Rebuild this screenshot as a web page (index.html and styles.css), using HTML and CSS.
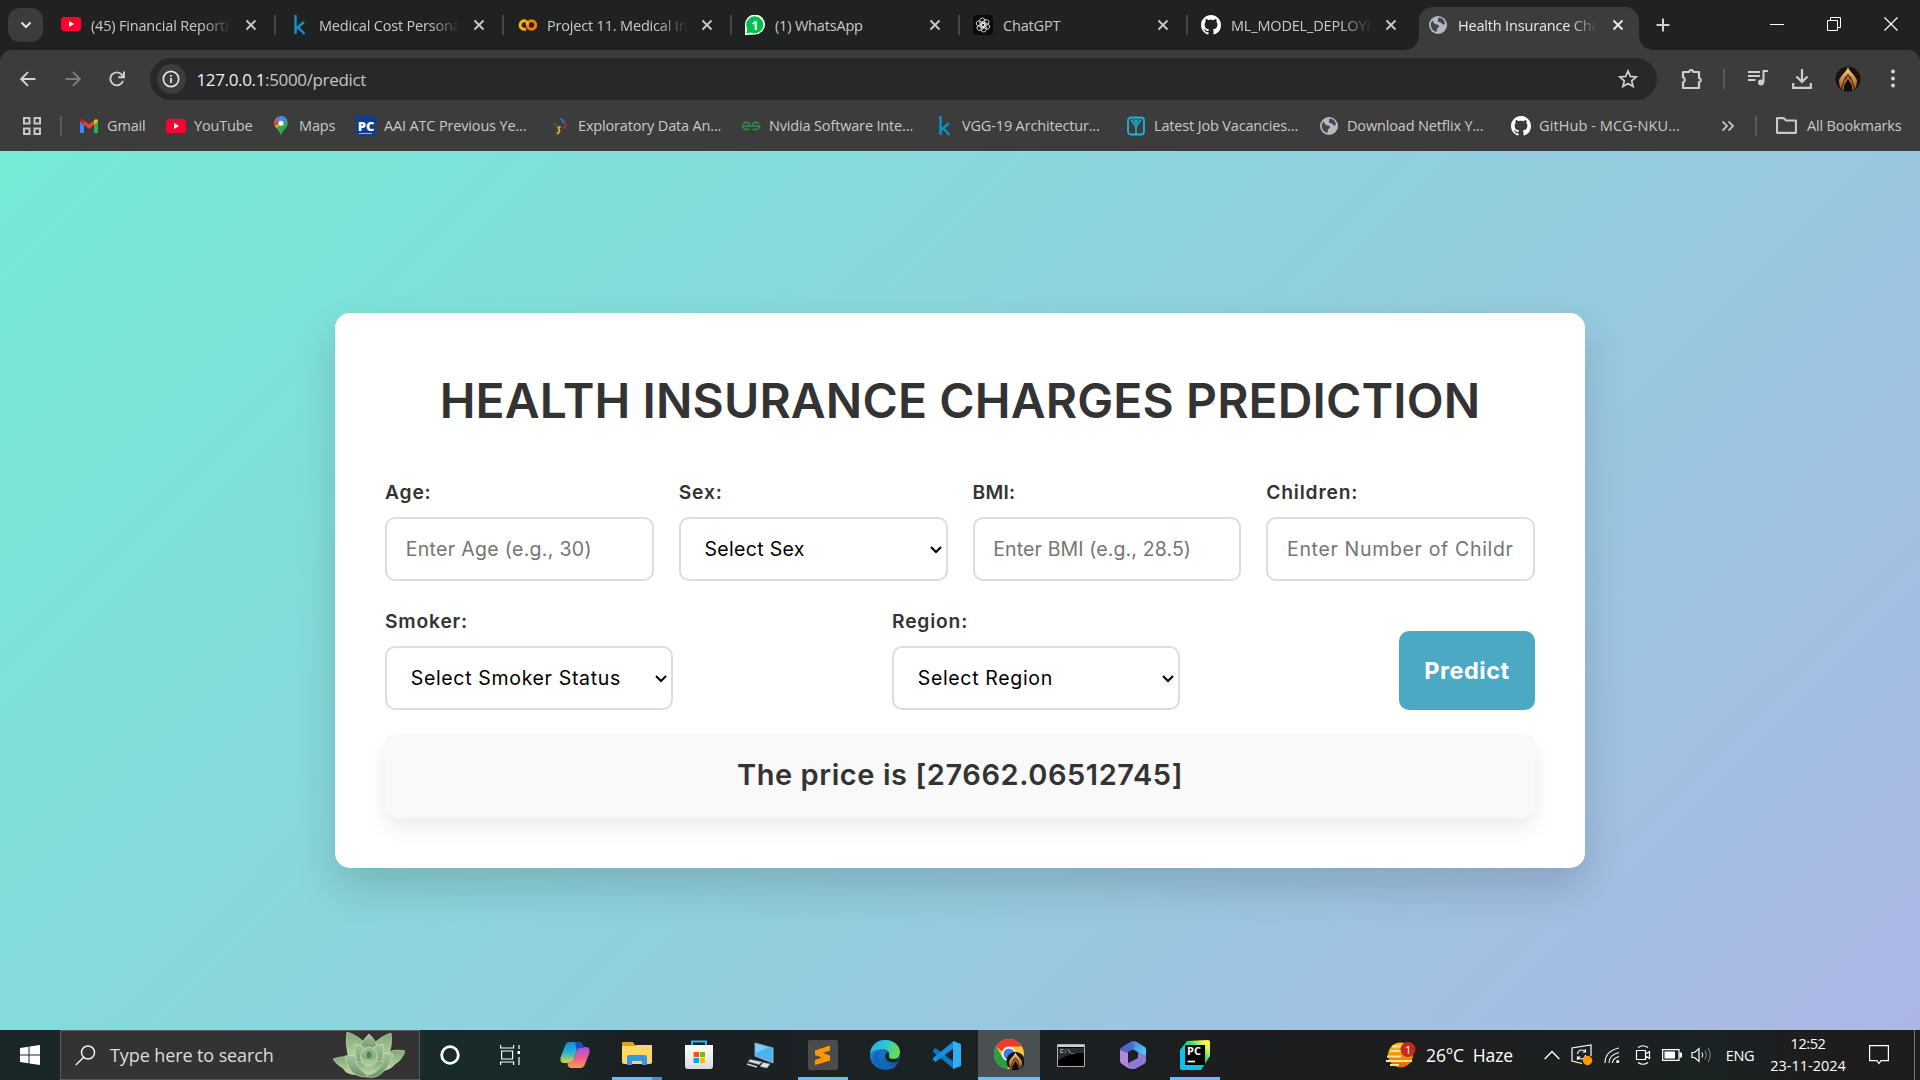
FILE: index.html
```html
<!DOCTYPE html>
<html lang="en">
<head>
<meta charset="utf-8">
<title>Health Insurance Charges Prediction</title>
<link rel="stylesheet" href="styles.css">
</head>
<body>
<svg class="defs" width="0" height="0" aria-hidden="true">
  <defs>
    <linearGradient id="gSilver" x1="0" y1="0" x2="0" y2="1"><stop offset="0" stop-color="#fff"/><stop offset="1" stop-color="#dcdcdc"/></linearGradient>
    <linearGradient id="gCopA" x1="0" y1="0" x2="0" y2="1"><stop offset="0" stop-color="#1488e8"/><stop offset=".5" stop-color="#25b3c9"/><stop offset="1" stop-color="#e8d03a"/></linearGradient>
    <linearGradient id="gCopB" x1="0" y1="0" x2="0" y2="1"><stop offset="0" stop-color="#a04ff0"/><stop offset=".5" stop-color="#ee5a94"/><stop offset="1" stop-color="#ff9a55"/></linearGradient>
    <linearGradient id="gEdgeA" x1="0" y1="0" x2="1" y2=".3"><stop offset="0" stop-color="#2aa9e8"/><stop offset=".5" stop-color="#2cc3d8"/><stop offset="1" stop-color="#66dd55"/></linearGradient>
    <linearGradient id="gEdgeB" x1="0" y1="0" x2="1" y2="1"><stop offset="0" stop-color="#1b8fe0"/><stop offset="1" stop-color="#0c4f9f"/></linearGradient>
    <linearGradient id="g365" x1="0" y1="0" x2="1" y2=".6"><stop offset="0" stop-color="#4a6fd8"/><stop offset="1" stop-color="#4fc8f5"/></linearGradient>
    <linearGradient id="gPy" x1="0" y1="1" x2="1" y2="0"><stop offset=".3" stop-color="#07c3f2"/><stop offset=".6" stop-color="#21d789"/><stop offset=".85" stop-color="#fcf84a"/></linearGradient>
    <linearGradient id="gSun" x1="0" y1="0" x2="0" y2="1"><stop offset="0" stop-color="#ffc800"/><stop offset="1" stop-color="#e8620a"/></linearGradient>
    <linearGradient id="gLeaf" x1="0" y1="0" x2="0" y2="1"><stop offset="0" stop-color="#7fa67c"/><stop offset="1" stop-color="#c3d8a2"/></linearGradient>
    <linearGradient id="gLeaf2" x1="0" y1="0" x2="0" y2="1"><stop offset="0" stop-color="#a3c49a"/><stop offset="1" stop-color="#6b9470"/></linearGradient>
    <linearGradient id="gGold" x1="0" y1="0" x2="0" y2="1"><stop offset="0" stop-color="#ffd08a"/><stop offset="1" stop-color="#a4501c"/></linearGradient>
    <symbol id="yt" viewBox="0 0 20 14"><rect width="20" height="14" rx="3" fill="#ff0033"/><path d="M8 4l5 3-5 3z" fill="#fff"/></symbol>
    <symbol id="kag" viewBox="0 0 20 20"><path d="M6.500 0v19M15 7L7 14M9 12.200L15.500 19" fill="none" stroke="#1290c6" stroke-width="2.400"/></symbol>
    <symbol id="x" viewBox="0 0 12 12"><path d="M1.500 1.500l9 9M10.500 1.500l-9 9" stroke="currentColor" stroke-width="1.900"/></symbol>
    <symbol id="gh" viewBox="0 0 16 16"><path fill="#fff" d="M8 0C3.58 0 0 3.58 0 8c0 3.54 2.29 6.53 5.47 7.59.4.07.55-.17.55-.38 0-.19-.01-.82-.01-1.49-2.01.37-2.53-.49-2.69-.94-.09-.23-.48-.94-.82-1.13-.28-.15-.68-.52-.01-.53.63-.01 1.08.58 1.23.82.72 1.21 1.87.87 2.33.66.07-.52.28-.87.51-1.07-1.78-.2-3.64-.89-3.64-3.95 0-.87.31-1.59.82-2.15-.08-.2-.36-1.02.08-2.12 0 0 .67-.21 2.2.82.64-.18 1.32-.27 2-.27s1.36.09 2 .27c1.53-1.04 2.2-.82 2.2-.82.44 1.100.16 1.920.08 2.120.51.56.82 1.270.82 2.150 0 3.070-1.870 3.750-3.650 3.950.29.25.54.73.54 1.480 0 1.070-.01 1.930-.01 2.200 0 .21.15.46.55.38A8.013 8.013 0 0 0 16 8c0-4.420-3.580-8-8-8z"/></symbol>
    <symbol id="globe" viewBox="0 0 18 18"><circle cx="9" cy="9" r="9" fill="#b4b9c1"/><path d="M3.200 4.500C5 6 4.500 7.500 6.500 8.200c2 .5 3.500.3 3.500 2-.2 1.500-2 1.300-2.200 3C7.500 15 8 16 7 15.800 3 14.500 1.500 11 1.800 7.500zM9 2c2-.8 4 .2 5 1.500 1.500 1.800 2 3.500 1.800 5-1.800.5-2.600-.8-3.800-1.800C10.800 6 9.500 6.500 9 5.300 8.700 4 9.800 3.500 9 2z" fill="#42464b"/></symbol>
    <symbol id="avatar" viewBox="0 0 26 26"><circle cx="13" cy="13" r="12.500" fill="#171310"/><path d="M13 1c1 4 6 7 9 13l-.5 5-1.500 4-3.500-11L13 8l-3.500 4L6 23l-1.500-4L4 14c3-6 8-9 9-13z" fill="url(#gGold)"/><path d="M13 9l3.500 5 2.500 9-1.500 1L13 14l-4.500 10L7 23l2.500-9z" fill="#a9642d"/><path d="M13 13l4 7v5H9v-5z" fill="#0d0a08"/></symbol>
  </defs>
</svg>

<div class="screen">
  <header class="browser">
    <div class="tabstrip">
      <button class="tab-search" aria-label="Search tabs"><svg width="12" height="8" viewBox="0 0 12 8"><path d="M1.500 1.500L6 6l4.500-4.500" fill="none" stroke="#e3e3e3" stroke-width="2"/></svg></button>
      <div class="tabs">
        <div class="tab"><svg class="fav" viewBox="0 0 20 20"><use href="#yt" y="2" width="20" height="14"/></svg><span class="tab-title fade">(45) Financial Reporti</span><svg class="close"><use href="#x"/></svg></div>
        <div class="tab"><svg class="fav"><use href="#kag"/></svg><span class="tab-title fade">Medical Cost Persona</span><svg class="close"><use href="#x"/></svg></div>
        <div class="tab"><svg class="fav" viewBox="0 0 20 20"><path d="M9 6.200a4.200 4.200 0 1 0 0 7.600" fill="none" stroke="#ffb300" stroke-width="3"/><circle cx="14.500" cy="10" r="4.200" fill="none" stroke="#f57c00" stroke-width="3"/><path d="M9 6.200q2 1.500 1.200 3.800" fill="none" stroke="#ffb300" stroke-width="3"/></svg><span class="tab-title fade">Project 11. Medical In</span><svg class="close"><use href="#x"/></svg></div>
        <div class="tab"><svg class="fav" viewBox="0 0 20 20"><path d="M0 20V9.500A10 10 0 1 1 10 19.500z" fill="#fff"/><path d="M1.500 18.500l.8-4.500A8.500 8.500 0 1 1 6 17.500z" fill="#00c04b"/><text x="10" y="14.600" text-anchor="middle" class="badge-num">1</text></svg><span class="tab-title">(1) WhatsApp</span><svg class="close"><use href="#x"/></svg></div>
        <div class="tab"><svg class="fav" viewBox="0 0 20 20"><rect width="20" height="20" rx="4" fill="#0b0b0b"/><g fill="none" stroke="#eee" stroke-width=".8"><rect id="petal" x="6.800" y="3" width="5" height="8.800" rx="2.500"/><use href="#petal" transform="rotate(60 10 10)"/><use href="#petal" transform="rotate(120 10 10)"/><use href="#petal" transform="rotate(180 10 10)"/><use href="#petal" transform="rotate(240 10 10)"/><use href="#petal" transform="rotate(300 10 10)"/></g></svg><span class="tab-title">ChatGPT</span><svg class="close"><use href="#x"/></svg></div>
        <div class="tab"><svg class="fav"><use href="#gh"/></svg><span class="tab-title fade">ML_MODEL_DEPLOYM</span><svg class="close"><use href="#x"/></svg></div>
        <div class="tab active"><svg class="fav small"><use href="#globe"/></svg><span class="tab-title fade">Health Insurance Cha</span><svg class="close"><use href="#x"/></svg></div>
      </div>
      <svg class="new-tab" viewBox="0 0 14 14"><path d="M7 .5v13M.5 7h13" stroke="#d0d0d0" stroke-width="2"/></svg>
      <div class="window-buttons">
        <svg width="14" height="14"><path d="M0 7.500h14" stroke="#fff"/></svg>
        <svg width="14" height="14"><path d="M.5 3.500h10v10H.5zM3.500 3.500v-3h10v10h-3" fill="none" stroke="#fff"/></svg>
        <svg width="14" height="14"><path d="M.5.5l13 13M13.500.5l-13 13" stroke="#fff" stroke-width="1.200"/></svg>
      </div>
    </div>

    <div class="toolbar">
      <svg class="nav" viewBox="0 0 16 16"><path d="M15.500 8H1.500M8 1.200L1.200 8 8 14.800" fill="none" stroke="#d2d2d2" stroke-width="1.900"/></svg>
      <svg class="nav" viewBox="0 0 16 16"><path d="M.5 8h14M8 1.200L14.800 8 8 14.800" fill="none" stroke="#7d7d7d" stroke-width="1.900"/></svg>
      <svg class="nav" viewBox="0 0 16 16"><path d="M14 10A6.500 6.500 0 1 1 12.800 3.600L14.500 5.800M15 .5v5.700H9.300" fill="none" stroke="#d2d2d2" stroke-width="1.900"/></svg>
      <div class="omnibox">
        <span class="site-info"><svg width="18" height="18" viewBox="0 0 18 18"><circle cx="9" cy="9" r="7.700" fill="none" stroke="#e3e3e3" stroke-width="1.700"/><path d="M9 8v5M9 5v1.800" stroke="#e3e3e3" stroke-width="1.800"/></svg></span>
        <span class="url"><b>127.0.0.1</b>:5000/predict</span>
        <svg class="star" viewBox="0 0 20 20"><path d="M10 2l2.300 5.400 5.900.5-4.500 3.900 1.400 5.700L10 14.500l-5.100 3 1.400-5.700-4.500-3.900 5.900-.5z" fill="none" stroke="#d0d0d0" stroke-width="1.700"/></svg>
      </div>
      <div class="actions">
        <svg width="22" height="22" viewBox="0 0 22 22"><path d="M2 4h6.200a2 2 0 0 1 4 0H18v6a2.200 2.200 0 0 1 0 4.300V20H2v-5.500a2.800 2.800 0 0 0 0-5.200z" fill="none" stroke="#cfcfcf" stroke-width="2.200" stroke-linejoin="round"/></svg>
        <i class="rule"></i>
        <svg width="20" height="20" viewBox="0 0 20 20"><path d="M0 3h12M0 7h12M0 11h7.500M15.500 13.500V2h4.500" fill="none" stroke="#cfcfcf" stroke-width="2"/><circle cx="13" cy="13.500" r="3" fill="#cfcfcf"/></svg>
        <svg width="20" height="20" viewBox="0 0 20 20"><path d="M10 0v12.500M4.500 7.500L10 13l5.500-5.500M1.200 14v4.800h17.600V14" fill="none" stroke="#cfcfcf" stroke-width="2.200"/></svg>
        <svg width="26" height="26"><use href="#avatar"/></svg>
        <svg width="6" height="20" viewBox="0 0 6 20"><g fill="#d2d2d2"><circle cx="3" cy="2.500" r="2"/><circle cx="3" cy="9.500" r="2"/><circle cx="3" cy="16.500" r="2"/></g></svg>
      </div>
    </div>

    <nav class="bookmarks">
      <span class="bm"><svg class="fav" viewBox="0 0 20 20"><path d="M2 2h5.500v5.500H2zM12.500 2H18v5.500h-5.500zM2 12.500h5.500V18H2zM12.500 12.500H18V18h-5.500z" fill="none" stroke="#c8c8c8" stroke-width="2"/></svg></span>
      <i class="rule"></i>
      <span class="bm"><svg class="fav" viewBox="0 0 20 20"><path d="M1 17V5l4 3v9z" fill="#4285f4"/><path d="M15 17V8l4-3v12z" fill="#34a853"/><path d="M15 8.500V4.500l1.500-1.200Q19 2.500 19 5.500z" fill="#fbbc04"/><path d="M5 8.500v-4l5 4 5-4v4.500l-5 3.800z" fill="#ea4335"/><path d="M1 5.500Q1 2.500 3.500 3.300L5 4.500v4.200z" fill="#c5221f"/></svg>Gmail</span>
      <span class="bm"><svg class="fav" viewBox="0 0 20 20"><use href="#yt" y="3" width="20" height="14"/></svg>YouTube</span>
      <span class="bm"><svg class="fav" viewBox="0 0 20 20"><path d="M10 .5a6.800 6.800 0 0 0-6.800 6.800c0 4.700 4.800 6 6.800 12.200 2-6.200 6.800-7.500 6.800-12.200A6.800 6.800 0 0 0 10 .5z" fill="#34a853"/><path d="M3.700 5A6.800 6.800 0 0 1 16 4L10 7.300 5.500 12C4 10.300 3 8.200 3.700 5z" fill="#fbbc04"/><path d="M4.800 3A6.800 6.800 0 0 0 4 10.200L10 7z" fill="#ea4335"/><path d="M4.800 3A6.800 6.800 0 0 1 16 4L10 8z" fill="#4285f4"/><circle cx="10" cy="7.300" r="2.500" fill="#fff"/></svg>Maps</span>
      <span class="bm"><svg class="fav" viewBox="0 0 20 20"><rect width="20" height="20" fill="#0b3f8f"/><text x="10" y="14.500" text-anchor="middle" class="pc-logo">PC</text><path d="M3 17.500h13" stroke="#9db7dd"/></svg>AAI ATC Previous Ye...</span>
      <span class="bm"><svg class="fav" viewBox="0 0 20 20"><g fill="none" stroke-width="2"><path d="M10 2.500l3 2v3" stroke="#2477b3"/><path d="M14.500 5.500l1.500 4-3 3" stroke="#a5333f"/><path d="M3.500 7l3 2.500v3" stroke="#276c43"/><path d="M7 18l2.500-2.500-1-4 2-1" stroke="#d8a82a"/></g></svg>Exploratory Data An...</span>
      <span class="bm"><svg class="fav" viewBox="0 0 20 20"><path d="M2 7.200q6.500-2.500 7 2.800H1.500q1.500 5 7 3M18 7.200q-6.500-2.500-7 2.800h7.500q-1.500 5-7 3" fill="none" stroke="#2f8d46" stroke-width="1.600"/></svg>Nvidia Software Inte...</span>
      <span class="bm"><svg class="fav"><use href="#kag"/></svg>VGG-19 Architectur...</span>
      <span class="bm"><svg class="fav" viewBox="0 0 20 20"><rect x="2" y="1.500" width="16" height="17" rx="3" fill="none" stroke="#1fb2dc" stroke-width="1.800"/><path d="M5 3.500L10 11l5-7.500M8 3l2 4 2-4M10 10v8" fill="none" stroke="#1fb2dc" stroke-width="1.500"/></svg>Latest Job Vacancies...</span>
      <span class="bm"><svg class="fav small"><use href="#globe"/></svg>Download Netflix Y...</span>
      <span class="bm wide"><svg class="fav"><use href="#gh"/></svg>GitHub - MCG-NKU...</span>
      <span class="bm"><svg class="more" viewBox="0 0 14 10"><path d="M1.500.5L6 5 1.500 9.500M7.500.5L12 5l-4.500 4.500" fill="none" stroke="#d0d0d0" stroke-width="1.700"/></svg></span>
      <i class="rule"></i>
      <span class="bm"><svg class="fav folder" viewBox="0 0 20 16"><path d="M1 1h6.500l2 2.200H19V15H1z" fill="none" stroke="#c8c8c8" stroke-width="2" stroke-linejoin="round"/></svg>All Bookmarks</span>
    </nav>
  </header>

  <main class="page">
    <form class="card">
      <h1>HEALTH INSURANCE CHARGES PREDICTION</h1>
      <div class="row four">
        <div class="field"><label for="age">Age:</label><input id="age" class="tight" type="text" placeholder="Enter Age (e.g., 30)"></div>
        <div class="field"><label for="sex">Sex:</label><select id="sex" class="tight"><option>Select Sex</option></select></div>
        <div class="field"><label for="bmi" class="snug">BMI:</label><input id="bmi" class="tighter" type="text" placeholder="Enter BMI (e.g., 28.5)"></div>
        <div class="field"><label for="children">Children:</label><input id="children" type="text" placeholder="Enter Number of Children"></div>
      </div>
      <div class="row split">
        <div class="field"><label for="smoker">Smoker:</label><select id="smoker"><option>Select Smoker Status</option></select></div>
        <div class="field"><label for="region">Region:</label><select id="region"><option>Select Region</option></select></div>
        <button class="predict" type="button">Predict</button>
      </div>
      <div class="result">The price is [27662.06512745]</div>
    </form>
  </main>

  <footer class="taskbar">
    <div class="start"><svg width="20" height="20" viewBox="0 0 20 20"><path d="M0 3l8.500-1.200v7.700H0zM9.500 1.600L20 0v9.500H9.500zM0 10.500h8.500v7.700L0 17zM9.500 10.500H20V20L9.500 18.400z" fill="#fff"/></svg></div>
    <div class="search">
      <svg width="21" height="21" viewBox="0 0 21 21"><circle cx="13" cy="7.500" r="6.500" fill="none" stroke="#eee" stroke-width="1.500"/><path d="M8.500 12.500L.8 20" stroke="#eee" stroke-width="1.500"/></svg>
      <span>Type here to search</span>
      <svg class="plant" width="72" height="46" viewBox="0 0 72 46"><g stroke="#d9e6b4" stroke-width=".6">
        <path d="M0 27q14-5 26 0l6 15q-18 3-22-6Q4 33 0 27z" fill="url(#gLeaf)"/><path d="M72 19q-12-3-22 4l-8 16q14 1 20-7 7-4 10-13z" fill="url(#gLeaf)"/>
        <path d="M14 0q13 4 20 14l-4 16-15-7q-3-12-1-23z" fill="url(#gLeaf)"/><path d="M58 1q-12 4-18 12l3 17 12-6q5-11 3-23z" fill="url(#gLeaf)"/>
        <path d="M36 2q8 7 9 16H26q2-9 10-16z" fill="url(#gLeaf2)"/>
        <path d="M12 24q10-3 18 6l4 15q-11 0-16-6-5-7-6-15z" fill="url(#gLeaf2)"/><path d="M60 22q-12-3-20 7l-6 16q10 2 16-5 8-7 10-18z" fill="url(#gLeaf2)"/>
        <path d="M22 12q12 1 14 13l-4 12q-12-5-10-25z" fill="url(#gLeaf2)"/><path d="M50 12q-12 1-15 12l5 13q13-7 10-25z" fill="url(#gLeaf2)"/>
        <path d="M22 30q7 12 14 13 9-2 15-14-7-1-15 4-7-4-14-3z" fill="url(#gLeaf)"/>
        <ellipse cx="36" cy="25" rx="8.500" ry="10" fill="url(#gLeaf2)"/><path d="M28 25q2 9 8 9 7-1 8-9-4 4-8 4t-8-4z" fill="url(#gLeaf)"/></g><ellipse cx="36" cy="22.500" rx="4.500" ry="5.500" fill="#8fb387"/><ellipse cx="36" cy="23" rx="2.500" ry="3.500" fill="#55805a"/></svg>
    </div>
    <div class="apps">
      <span class="app slim"><svg width="20" height="20"><circle cx="10" cy="10" r="8.300" fill="none" stroke="#fff" stroke-width="2.800"/></svg></span>
      <span class="app slim"><svg width="20" height="20" viewBox="0 0 20 20"><path d="M.6 0v3h13V0M.6 20v-3h13v3M1.600 6h11v8h-11zM19 0v4M19 12v8" fill="none" stroke="#fff" stroke-width="1.200"/><path d="M17.500 6h2.500v3h-2.500z" fill="#fff"/></svg></span>
      <span class="app copilot"><svg width="30" height="28" viewBox="0 0 30 28"><path d="M10 1h9q3 0 4 4l.6 2h-4q-2 0-3 3l-3 9q-1 3-4 3H4Q-1 22 1 15L5 5q1-4 5-4z" fill="url(#gCopA)"/><path d="M20 27h-9q-3 0-3.500-4L7 21h4q2 0 3-3l3-9q1-3 4-3h5q5 0 3 7l-4 10q-1 4-5 4z" fill="url(#gCopB)"/><path d="M15 1h4q3 0 4 4l.6 2h-4q-2 0-3 2z" fill="#1a50b8"/></svg></span>
      <span class="app open stacked"><svg width="30" height="28" viewBox="0 0 30 28"><path d="M1 1h10l2 3h15q2 0 2 2v15H0V2q0-1 1-1z" fill="#e2a11b"/><path d="M0 5h13l2-1h15v17q0 2-2 2H2q-2 0-2-2z" fill="#ffd768"/><path d="M5 24v-8q0-2 2-2h16q2 0 2 2v8h-5v-4H10v4z" fill="#3a96e4"/></svg></span>
      <span class="app"><svg width="30" height="30" viewBox="0 0 30 30"><path d="M8 6V1.500h14V6" fill="none" stroke="#2bb4ee" stroke-width="2"/><path d="M1 5h28v21q0 3-3 3H4q-3 0-3-3z" fill="url(#gSilver)"/><path d="M9.500 12H15v5H9.500z" fill="#f25022"/><path d="M16 12h5v5h-5z" fill="#7fba00"/><path d="M9.500 18H15v5H9.500z" fill="#00a4ef"/><path d="M16 18h5v5h-5z" fill="#ffb900"/></svg></span>
      <span class="app"><svg width="30" height="28" viewBox="0 0 30 28"><path d="M9 2l18 5v15L9 15z" fill="#4bb2f4" stroke="#a9c4d4" stroke-width=".8"/><path d="M10 3l12 3.500L10 12z" fill="#7fccfa"/><path d="M4 18.500l12 2.500-3 2.500L2 20.500zM17 21.500l7 1.500-3 4-7-1.500z" fill="#dfe3e5" stroke="#8b9499" stroke-width=".6"/><path d="M1 23l10 3" stroke="#cfd5d8" stroke-width="1.600"/></svg></span>
      <span class="app open"><svg width="30" height="30" viewBox="0 0 30 30"><rect width="30" height="30" rx="2" fill="#4b4b4b"/><path d="M7 10.500L22 5.500v5l-7 2.500 7 2.500v5L7 25v-5l7-2.500-7-2.500z" fill="#ff9800"/></svg></span>
      <span class="app"><svg width="30" height="30" viewBox="0 0 30 30"><circle cx="15" cy="15" r="15" fill="url(#gEdgeB)"/><path d="M0 14C1 5 7 0 15 0c9 0 15 6 15 12 0 4-3 7-7 7-3 0-5-1-4.500-2C20 15 20 9 12.500 9 6 9 1 12 0 14z" fill="url(#gEdgeA)"/><path d="M12 10c-4 3-4 8-1 12 4 5 12 5 16 2l1-1-4 5q-8 3-15-1C1 23 1 12 12 10z" fill="#1267b4"/><path d="M19 17.500q2 2.500 10 1l-1 2.800q-7 3-11-.8-4-5 1-9 2 2.500 1 6z" fill="#1b2325"/></svg></span>
      <span class="app"><svg width="30" height="30" viewBox="0 0 30 30"><path d="M1 10l2.500-2L22 22v7L1 12z" fill="#0b78c8"/><path d="M1 20l2.500 2L22 8V1L1 18z" fill="#1590e0"/><path d="M21 1l8 3v22l-8 3z" fill="#32aef5"/></svg></span>
      <span class="app open current"><svg width="30" height="32" viewBox="0 0 30 32"><circle cx="15" cy="15" r="15" fill="#fcc934"/><path d="M2 7.500A15 15 0 0 1 28 7.500H15a7.500 7.500 0 0 0-7 5z" fill="#ea3d2f"/><path d="M2 7.500L9 19q3 4 8 3l-4 8A15 15 0 0 1 2 7.500z" fill="#2a9d48"/><circle cx="15" cy="15" r="7" fill="#fff"/><circle cx="15" cy="15" r="5.500" fill="#3a7cf0"/><use href="#avatar" x="12" y="12" width="19" height="20"/></svg></span>
      <span class="app"><svg width="28" height="23" viewBox="0 0 28 23"><path d="M.5.5h27v22H.5z" fill="#000" stroke="#a9b0b3"/><path d="M1 1h26v2H1z" fill="#cbd1d3"/><path d="M1 4h26v5Q14 8 1 16z" fill="#2a2c2d"/><text x="3" y="9" class="cmd">C:\_</text></svg></span>
      <span class="app"><svg width="26" height="28" viewBox="0 0 26 28"><path d="M12 0l4 .5L25 6q1 1 1 3v7l-9-5-4-2.500L8 11z" fill="url(#g365)"/><path d="M12 0L2 6Q0 7 0 9v11l8-3v-6l5-3q3-4-1-8z" fill="#4f66cf"/><path d="M0 9v11q0 2 2 3l6 4 3 1q-3-3-3-6V12q-5-1-8-3z" fill="#b487dc"/><path d="M26 14v6q0 2-2 3l-9 5q-2 .5-4 0-3-2-3-6l5-2.500 5-2.700V12z" fill="#8f78d8"/><path d="M13 8.500l5 2.800v5.500l-5 2.800-5-2.800v-5.500z" fill="#1c2022"/></svg></span>
      <span class="app open"><svg width="30" height="30" viewBox="0 0 30 30"><path d="M0 10L7 1l21-1q2 0 2 2v14l-9 14H2q-2 0-2-2z" fill="url(#gPy)"/><path d="M5 5h20v20H5z" fill="#000"/><text x="7" y="15" class="py">PC</text><path d="M7.500 21.500H15" stroke="#fff" stroke-width="1.700"/></svg></span>
    </div>
    <div class="tray">
      <span class="weather"><svg width="30" height="28" viewBox="0 0 30 28"><circle cx="14.500" cy="14" r="12.500" fill="url(#gSun)"/><path d="M6 5.500h9M4 10h12M1 15.500h14M0 20h26M4 24h9" stroke="#ffe2a0" stroke-width="2"/><circle cx="22" cy="8.500" r="7.500" fill="#c42b1c"/><text x="22" y="12.500" text-anchor="middle" class="alert">1</text></svg>26°C&nbsp; Haze</span>
      <span class="cell w32"><svg width="16" height="10"><path d="M.7 9L8 1.500 15.300 9" fill="none" stroke="#fff" stroke-width="1.300"/></svg></span>
      <span class="cell w28"><svg width="22" height="22" viewBox="0 0 22 22"><path d="M11 19.500L1 17V4l19-3v11" fill="none" stroke="#fff" stroke-width="1.200"/><path d="M6.500 10q.5-4 4.500-4 2 0 3.500 1.500V5m0 3h-3M14.500 11q-.5 4-4.500 4-2 0-3.500-1.500V16m0-3h3" fill="none" stroke="#fff" stroke-width="1.200"/><circle cx="16.500" cy="16.500" r="4.700" fill="#ff9900"/></svg></span>
      <span class="cell w32"><svg width="16" height="17" viewBox="0 0 16 17"><g fill="none" stroke="#fff" stroke-width="1.100"><path d="M8.500 16q0-4.500 6.500-6.500"/><path d="M5 16q0-8 10-10.500"/><path d="M1 16Q1 4 15 1"/></g><circle cx="13.700" cy="14.500" r="1.600" fill="#fff"/></svg></span>
      <span class="cell w29"><svg width="16" height="20" viewBox="0 0 16 20"><path d="M3 2.500q5-3.500 10 0M3 17.500q5 3.500 10 0M1.500 5.500h9v9h-9zM10.500 9l4-2.500v7l-4-2.500" fill="none" stroke="#fff" stroke-width="1.200"/></svg></span>
      <span class="cell w30"><svg width="20" height="12"><path d="M.6.600h16.400v10.800H.6z" fill="none" stroke="#fff" stroke-width="1.200"/><path d="M2.500 2.500H13v7H2.500zM17.500 3.500H20v5h-2.500z" fill="#fff"/></svg></span>
      <span class="cell w30"><svg width="22" height="16" viewBox="0 0 22 16"><path d="M1 5.500h2.500L8 1.500v13l-4.500-4H1z" fill="none" stroke="#fff" stroke-width="1.200"/><path d="M11 5.500q1.500 2.500 0 5" fill="none" stroke="#fff"/><path d="M14 3.500q3 4.500 0 9M17 1q4.500 7 0 14" fill="none" stroke="#8b8b8b"/></svg></span>
      <span class="lang">ENG</span>
      <span class="clock"><time>12:52</time><time>23-11-2024</time></span>
      <span class="cell w52"><svg width="20" height="20" viewBox="0 0 20 20"><path d="M.6.600h18.800v15H12L10 18.500 8 15.600H.6z" fill="none" stroke="#fff" stroke-width="1.200"/></svg></span>
      <span class="peek"></span>
    </div>
  </footer>
</div>
</body>
</html>
```
FILE: styles.css
```css
* { box-sizing: border-box; }
body { margin: 0; font-family: "Open Sans", "Noto Sans", sans-serif; }
svg { display: block; flex: none; }
.defs { position: absolute; }

.screen { display: flex; flex-direction: column; width: 1920px; height: 1080px; overflow: hidden; }

/* Browser chrome */
.browser { height: 151px; background: #1f2221; font-size: 14.5px; }
.tabstrip { display: flex; align-items: center; height: 50px; padding-left: 8px; }
.tab-search { display: grid; place-items: center; width: 35px; height: 34px; padding: 0; border: 0; border-radius: 12px; background: #3c3c3c; }
.tabs { display: flex; align-self: stretch; margin-left: 5px; }
.tab { display: flex; align-items: center; width: 228px; padding-left: 13px; color: #c9c9c9; letter-spacing: -.18px; background: linear-gradient(#454746, #454746) no-repeat right 0 top 15px / 2px 20px; }
.tab:nth-last-child(2) { background: none; }
.tab .fav { margin-right: 10px; }
.tab-title { width: 142px; white-space: nowrap; }
.fade { mask-image: linear-gradient(90deg, #000 78%, transparent 99%); }
.fav { width: 20px; height: 20px; }
.fav.small { width: 18px; height: 18px; margin-left: 1px; margin-right: 11px; }
.close { width: 12px; height: 12px; margin-left: 12px; }
.active { position: relative; width: 220px; margin: 7px 0 0 3px; padding: 0 0 7px 9px; border-radius: 14px 14px 0 0; background: #3c3c3c; color: #e8e8e8; }
.active::before, .active::after { content: ""; position: absolute; bottom: 0; width: 14px; height: 14px; }
.active::before { right: 100%; background: radial-gradient(circle at 0 0, transparent 13.500px, #3c3c3c 14px); }
.active::after { left: 100%; background: radial-gradient(circle at 100% 0, transparent 13.500px, #3c3c3c 14px); }
.new-tab { width: 14px; height: 14px; margin-left: 17px; }
.window-buttons { display: flex; gap: 43px; margin: -2px 22px 0 auto; }

.toolbar { display: flex; align-items: center; height: 58px; padding-left: 20px; background: #3c3c3c; border-radius: 12px 12px 0 0; }
.nav { width: 16px; height: 16px; margin-right: 28.500px; }
.omnibox { display: flex; align-items: center; width: 1507px; height: 42px; margin-left: -4px; padding: 0 19px 0 7px; border-radius: 21px; background: #282828; }
.site-info { display: grid; place-items: center; width: 29px; height: 30px; border-radius: 50%; background: #3c3c3c; }
.url { margin-left: 11px; font-size: 17px; letter-spacing: -.35px; color: #c4c4c4; }
.url b { font-weight: 400; color: #f0f0f0; }
.star { width: 20px; height: 20px; margin-left: auto; }
.actions { display: flex; align-items: center; margin-left: 24px; }
.actions .rule { margin: 0 23px 0 20px; }
.actions svg + svg { margin-left: 24px; }
.actions svg:nth-of-type(4) { margin-left: 23px; }
.actions svg:nth-of-type(5) { margin-left: 29px; }
.rule { display: block; width: 2px; height: 20px; background: #5a5a5a; }

.bookmarks { display: grid; grid-template-columns: 38px 19px 87px 105px 85px 194px 191px 193px 192px 193px 192px 210px 34px 21px 1fr; align-items: center; height: 43px; padding: 0 0 8px 22px; background: #3c3c3c; color: #c9c9c9; letter-spacing: -.16px; }
.bm { display: flex; align-items: center; gap: 8px; white-space: nowrap; }
.bm.wide { letter-spacing: .09px; }
.bm .fav.small { margin: 0 1px; }
.bm .folder { width: 21px; height: 17px; margin-right: 2px; }
.more { width: 14px; height: 10px; }

/* Web page, laid out at 125% browser scale */
.page { display: flex; align-items: center; justify-content: center; height: 879px; background: linear-gradient(135deg, #74ebd5, #acb6e5); }
.card { zoom: 1.25; width: 1000px; height: 444px; padding: 40px; border-radius: 12px; background: #fff; box-shadow: 0 16px 32px rgba(0, 0, 0, .15); color: #333; font-family: Inter, "Open Sans", sans-serif; }
h1 { margin: 0 0 31px; font-size: 38.400px; font-weight: 600; line-height: 60px; text-align: center; letter-spacing: .1px; white-space: nowrap; }
.row { display: flex; gap: 20px; margin-bottom: 20.400px; }
.split { justify-content: space-between; align-items: flex-end; gap: 0; margin-bottom: 19.600px; }
.four .field { flex: 1; min-width: 0; }
.split .field { width: 230.400px; }
label { display: block; margin-bottom: 8px; font-size: 15.400px; font-weight: 600; line-height: 24px; letter-spacing: .66px; }
.snug { letter-spacing: .2px; }
input, select { display: block; width: 100%; height: 51px; padding: 0 15px; border: 1.600px solid #ddd; border-radius: 8px; background: #fff; color: #000; font: 400 15.600px Inter, sans-serif; letter-spacing: .53px; outline: 0; }
input::placeholder { color: #757575; opacity: 1; }
.tight { letter-spacing: .25px; }
.tighter { letter-spacing: .1px; }
.predict { width: 108.800px; height: 63px; padding: 0; border: 0; border-radius: 8px; background: #4ba9c3; color: #fff; font: 700 18.800px Inter, sans-serif; letter-spacing: .4px; }
.result { height: 66.800px; border-radius: 8px; background: #f9f9f9; box-shadow: 0 8px 16px rgba(0, 0, 0, .08); font-size: 23.200px; font-weight: 600; line-height: 65.500px; text-align: center; letter-spacing: .46px; }

/* Taskbar */
.taskbar { display: flex; height: 50px; background: linear-gradient(90deg, #1b2626, #182b2a 540px, #1b2023 620px, #1b2224 950px, #1c1c1d 1300px, #1d1f1f 1500px, #1a2222 1720px, #1d1d1d 1800px); color: #fff; }
.start { display: grid; place-items: center; width: 60px; }
.search { display: flex; align-items: center; width: 360px; padding: 0 14px; gap: 14px; border: 1px solid #5b5b5b; background: #333; color: #dcdcdc; font-size: 18px; letter-spacing: -.1px; }
.plant { margin-left: auto; }
.apps { display: flex; }
.app { position: relative; display: grid; place-items: center; width: 62px; }
.app.slim { width: 60px; }
.copilot { margin-left: 4px; }
.open::after { content: ""; position: absolute; bottom: 0; left: 6px; right: 6px; height: 3px; background: #76b9ed; }
.stacked::after { background: linear-gradient(90deg, #76b9ed 40px, #5a8db5 40px); }
.current { background: #4a4f51; }
.current::after { left: 0; right: 0; }
.tray { display: flex; align-items: center; margin-left: auto; }
.weather { display: flex; align-items: center; gap: 10px; width: 150px; font-size: 17.500px; letter-spacing: -.13px; white-space: nowrap; }
.cell { display: grid; place-items: center; }
.w28 { width: 28px; } .w29 { width: 29px; } .w30 { width: 30px; } .w32 { width: 32px; } .w52 { width: 52px; }
.lang { width: 46px; text-align: center; font-size: 14.500px; letter-spacing: -.3px; }
.clock { display: flex; flex-direction: column; width: 90px; font-size: 14.500px; line-height: 22.500px; text-align: center; }
.clock time:first-child { letter-spacing: -.4px; }
.peek { align-self: stretch; width: 15px; background: linear-gradient(#777, #777) no-repeat 9px 0 / 1px 100%; }

/* Lettering inside icons */
.badge-num { font: 700 13px "Open Sans", sans-serif; fill: #fff; }
.pc-logo { font: 800 13px "Open Sans", sans-serif; fill: #fff; }
.cmd { font: 6px "Liberation Mono", monospace; fill: #fff; }
.py { font: 700 11px "Open Sans", sans-serif; fill: #fff; }
.alert { font: 11px "Open Sans", sans-serif; fill: #fff; }
```
